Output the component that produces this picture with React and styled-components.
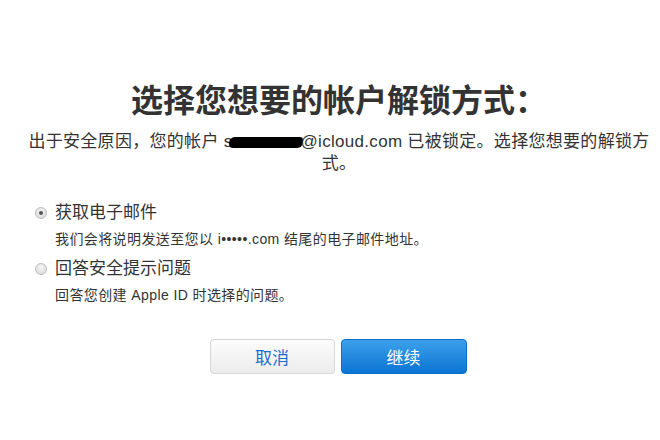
import React from 'react';
import styled, { createGlobalStyle } from 'styled-components';

const GlobalStyle = createGlobalStyle`
  body {
    margin: 0;
    background: #fff;
    font-family: "Liberation Sans", "Noto Sans CJK SC", sans-serif;
    color: #333;
  }
`;

const Page = styled.div`
  width: 660px;
  height: 440px;
  padding-top: 79px;
  box-sizing: border-box;
`;

const Title = styled.h1`
  margin: 0;
  text-align: center;
  font-size: 32px;
  line-height: 44px;
  font-weight: bold;
  color: #333;
  padding-left: 18px;
`;

const Intro = styled.p`
  margin: 8px 0 0;
  padding: 0 4px 0 22px;
  text-align: center;
  font-size: 17px;
  line-height: 22px;
  letter-spacing: 0.3px;
`;

const Redacted = styled.span`
  display: inline-block;
  width: 74px;
  height: 11px;
  margin: 0 -2px 0 -4px;
  background: #000;
  border-radius: 6px 3px 6px 4px;
  vertical-align: -1px;
`;

const Options = styled.div`
  margin-top: 26px;
  padding-left: 35px;
  display: flex;
  flex-direction: column;
  gap: 4px;
`;

const Option = styled.label`
  display: grid;
  grid-template-columns: 20px 1fr;
  align-items: center;
`;

const Radio = styled.span`
  width: 10px;
  height: 10px;
  border-radius: 50%;
  border: 1px solid #bdbdbd;
  background: radial-gradient(circle at 50% 35%, #f4f4f4, #d8d8d8);
  display: flex;
  align-items: center;
  justify-content: center;

  &::after {
    content: '';
    width: 4px;
    height: 4px;
    border-radius: 50%;
    background: ${p => (p.$checked ? '#555' : 'transparent')};
  }
`;

const OptionLabel = styled.span`
  font-size: 17px;
  line-height: 24px;
`;

const OptionHint = styled.span`
  grid-column: 2;
  font-size: 14px;
  line-height: 28px;
  letter-spacing: 0.4px;
  color: #333;
`;

const Buttons = styled.div`
  margin-top: 30px;
  display: flex;
  justify-content: center;
  gap: 6px;
  padding-left: 16px;
`;

const Button = styled.button`
  width: ${p => (p.$primary ? '126px' : '125px')};
  height: 35px;
  border-radius: 4px;
  font-family: inherit;
  font-size: 17px;
  cursor: pointer;
  border: 1px solid ${p => (p.$primary ? '#0a6fc8' : '#d6d6d6')};
  color: ${p => (p.$primary ? '#fff' : '#1a6dd0')};
  background: ${p =>
    p.$primary
      ? 'linear-gradient(#3ca0ea, #0b74d3)'
      : 'linear-gradient(#fcfcfc, #ececec)'};
`;

export default function App() {
  return (
    <Page>
      <GlobalStyle />
      <Title>选择您想要的帐户解锁方式：</Title>
      <Intro>
        出于安全原因，您的帐户 s<Redacted />@icloud.com 已被锁定。选择您想要的解锁方式。
      </Intro>
      <Options>
        <Option>
          <Radio $checked />
          <OptionLabel>获取电子邮件</OptionLabel>
          <OptionHint>我们会将说明发送至您以 i•••••.com 结尾的电子邮件地址。</OptionHint>
        </Option>
        <Option>
          <Radio />
          <OptionLabel>回答安全提示问题</OptionLabel>
          <OptionHint>回答您创建 Apple ID 时选择的问题。</OptionHint>
        </Option>
      </Options>
      <Buttons>
        <Button>取消</Button>
        <Button $primary>继续</Button>
      </Buttons>
    </Page>
  );
}
